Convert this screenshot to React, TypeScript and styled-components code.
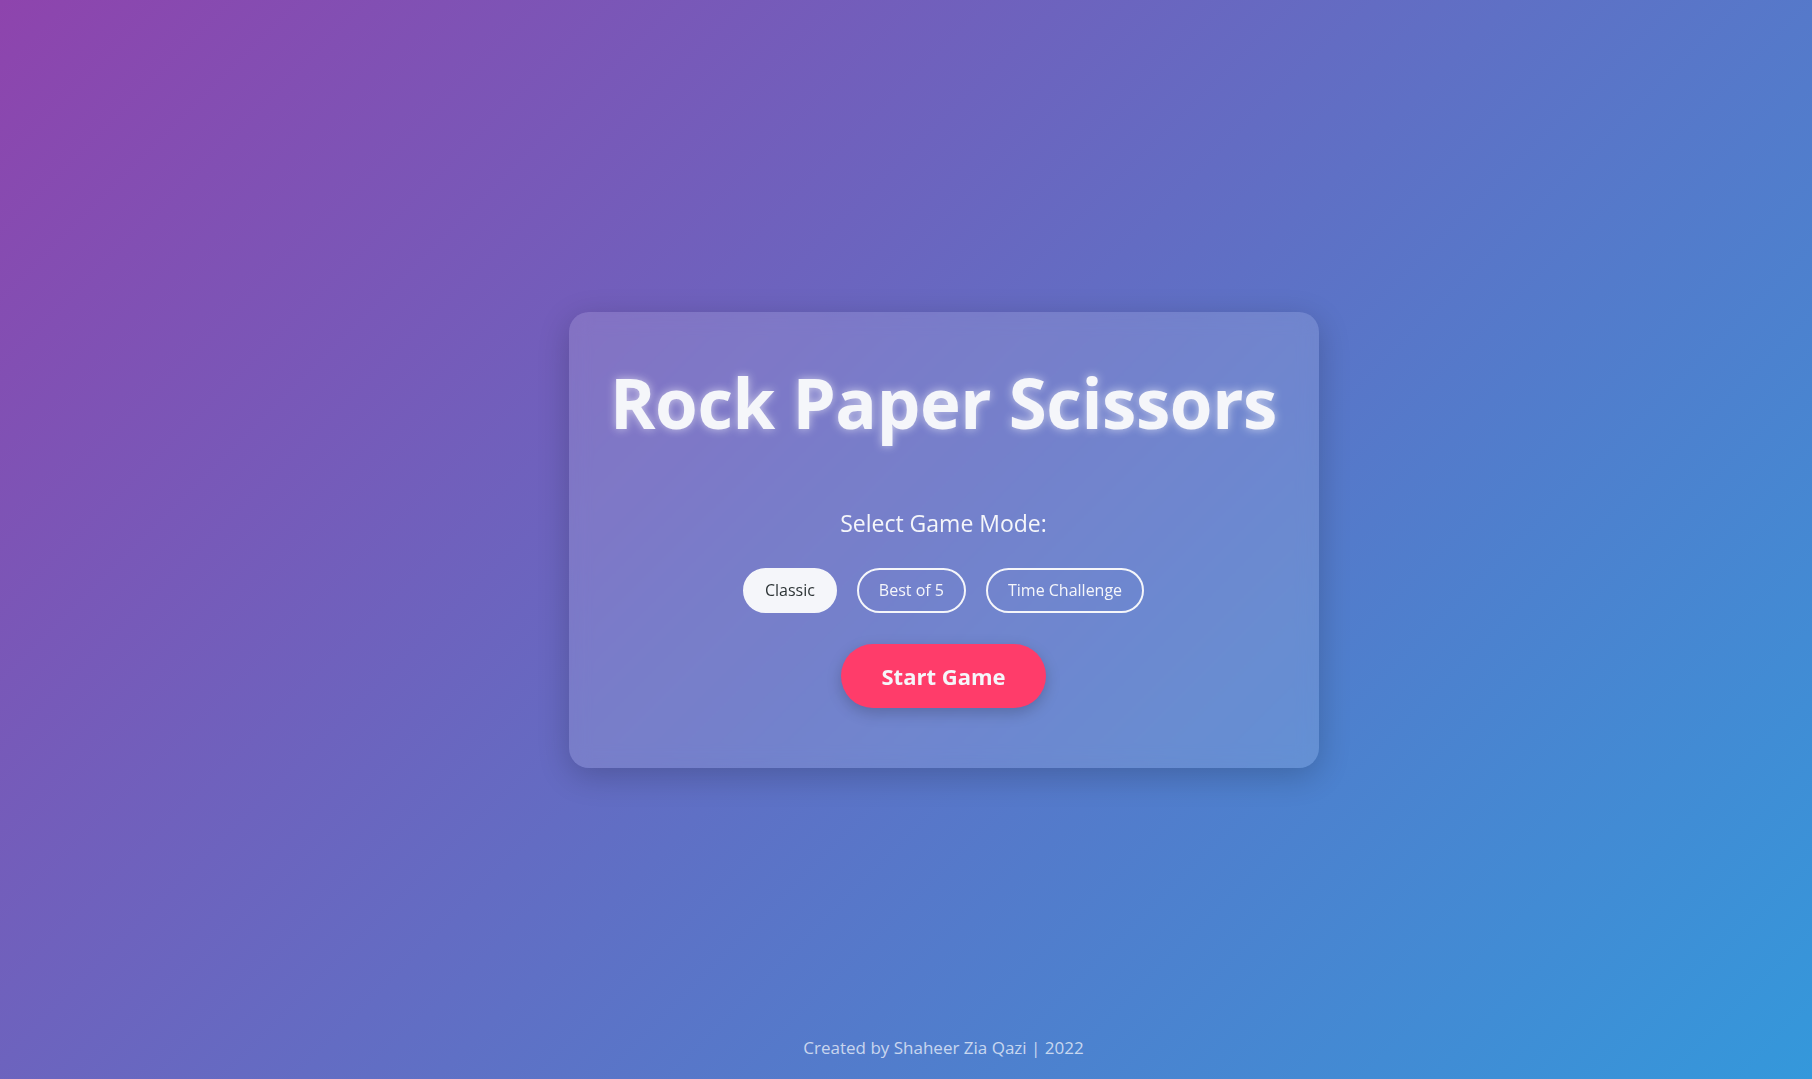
import React, { useState } from "react";
import styled, { createGlobalStyle } from "styled-components";

const GlobalStyle = createGlobalStyle`
  * { box-sizing: border-box; }
  html, body { margin: 0; padding: 0; height: 100%; }
  body {
    font-family: "Open Sans", "Noto Sans", "Liberation Sans", sans-serif;
    background: linear-gradient(135deg, #8e44ad, #3498db);
    color: #f5f6fa;
    overflow: hidden;
  }
`;

const Page = styled.div`
  height: 100vh;
  display: grid;
  grid-template-rows: 1fr auto 1fr;
  justify-items: center;
  padding-left: 75px;
`;

const Card = styled.main`
  grid-row: 2;
  width: 750px;
  padding: 40px 40px 60px;
  border-radius: 20px;
  background: rgba(255, 255, 255, 0.13);
  backdrop-filter: blur(10px);
  box-shadow: 0 8px 32px rgba(0, 0, 0, 0.2);
  display: flex;
  flex-direction: column;
  align-items: center;
`;

const Title = styled.h1`
  margin: 3px 0 57px;
  font-size: 69px;
  line-height: 95px;
  font-weight: 700;
  letter-spacing: -0.4px;
  color: #f5f6fa;
  text-shadow: 0 0 10px rgba(255, 255, 255, 0.6);
  white-space: nowrap;
`;

const Label = styled.h2`
  margin: 0 0 29px;
  font-size: 23px;
  line-height: 32px;
  font-weight: 400;
  color: #f5f6fa;
`;

const ModeRow = styled.div`
  display: flex;
  gap: 20px;
  margin-bottom: 31px;
`;

const ModeButton = styled.button<{ $active: boolean }>`
  font-family: inherit;
  font-size: 16px;
  line-height: 21px;
  padding: 10px 20px;
  border: 2px solid #f5f6fa;
  border-radius: 30px;
  background: ${(p) => (p.$active ? "#f5f6fa" : "transparent")};
  color: ${(p) => (p.$active ? "#2d3436" : "#f5f6fa")};
  cursor: pointer;
`;

const StartButton = styled.button`
  font-family: inherit;
  font-size: 22px;
  line-height: 30px;
  font-weight: 700;
  padding: 17px 40px;
  border: none;
  border-radius: 50px;
  background: #ff3c6a;
  color: #f5f6fa;
  box-shadow: 0 5px 15px rgba(0, 0, 0, 0.2);
  cursor: pointer;
`;

const Footer = styled.footer`
  grid-row: 3;
  align-self: end;
  padding-bottom: 20px;
  font-size: 17px;
  line-height: 23px;
  color: rgba(255, 255, 255, 0.7);
`;

const modes = ["Classic", "Best of 5", "Time Challenge"];

export default function App() {
  const [mode, setMode] = useState("Classic");
  return (
    <>
      <GlobalStyle />
      <Page>
        <Card>
          <Title>Rock Paper Scissors</Title>
          <Label>Select Game Mode:</Label>
          <ModeRow>
            {modes.map((m) => (
              <ModeButton key={m} $active={m === mode} onClick={() => setMode(m)}>
                {m}
              </ModeButton>
            ))}
          </ModeRow>
          <StartButton>Start Game</StartButton>
        </Card>
        <Footer>Created by Shaheer Zia Qazi | 2022</Footer>
      </Page>
    </>
  );
}
